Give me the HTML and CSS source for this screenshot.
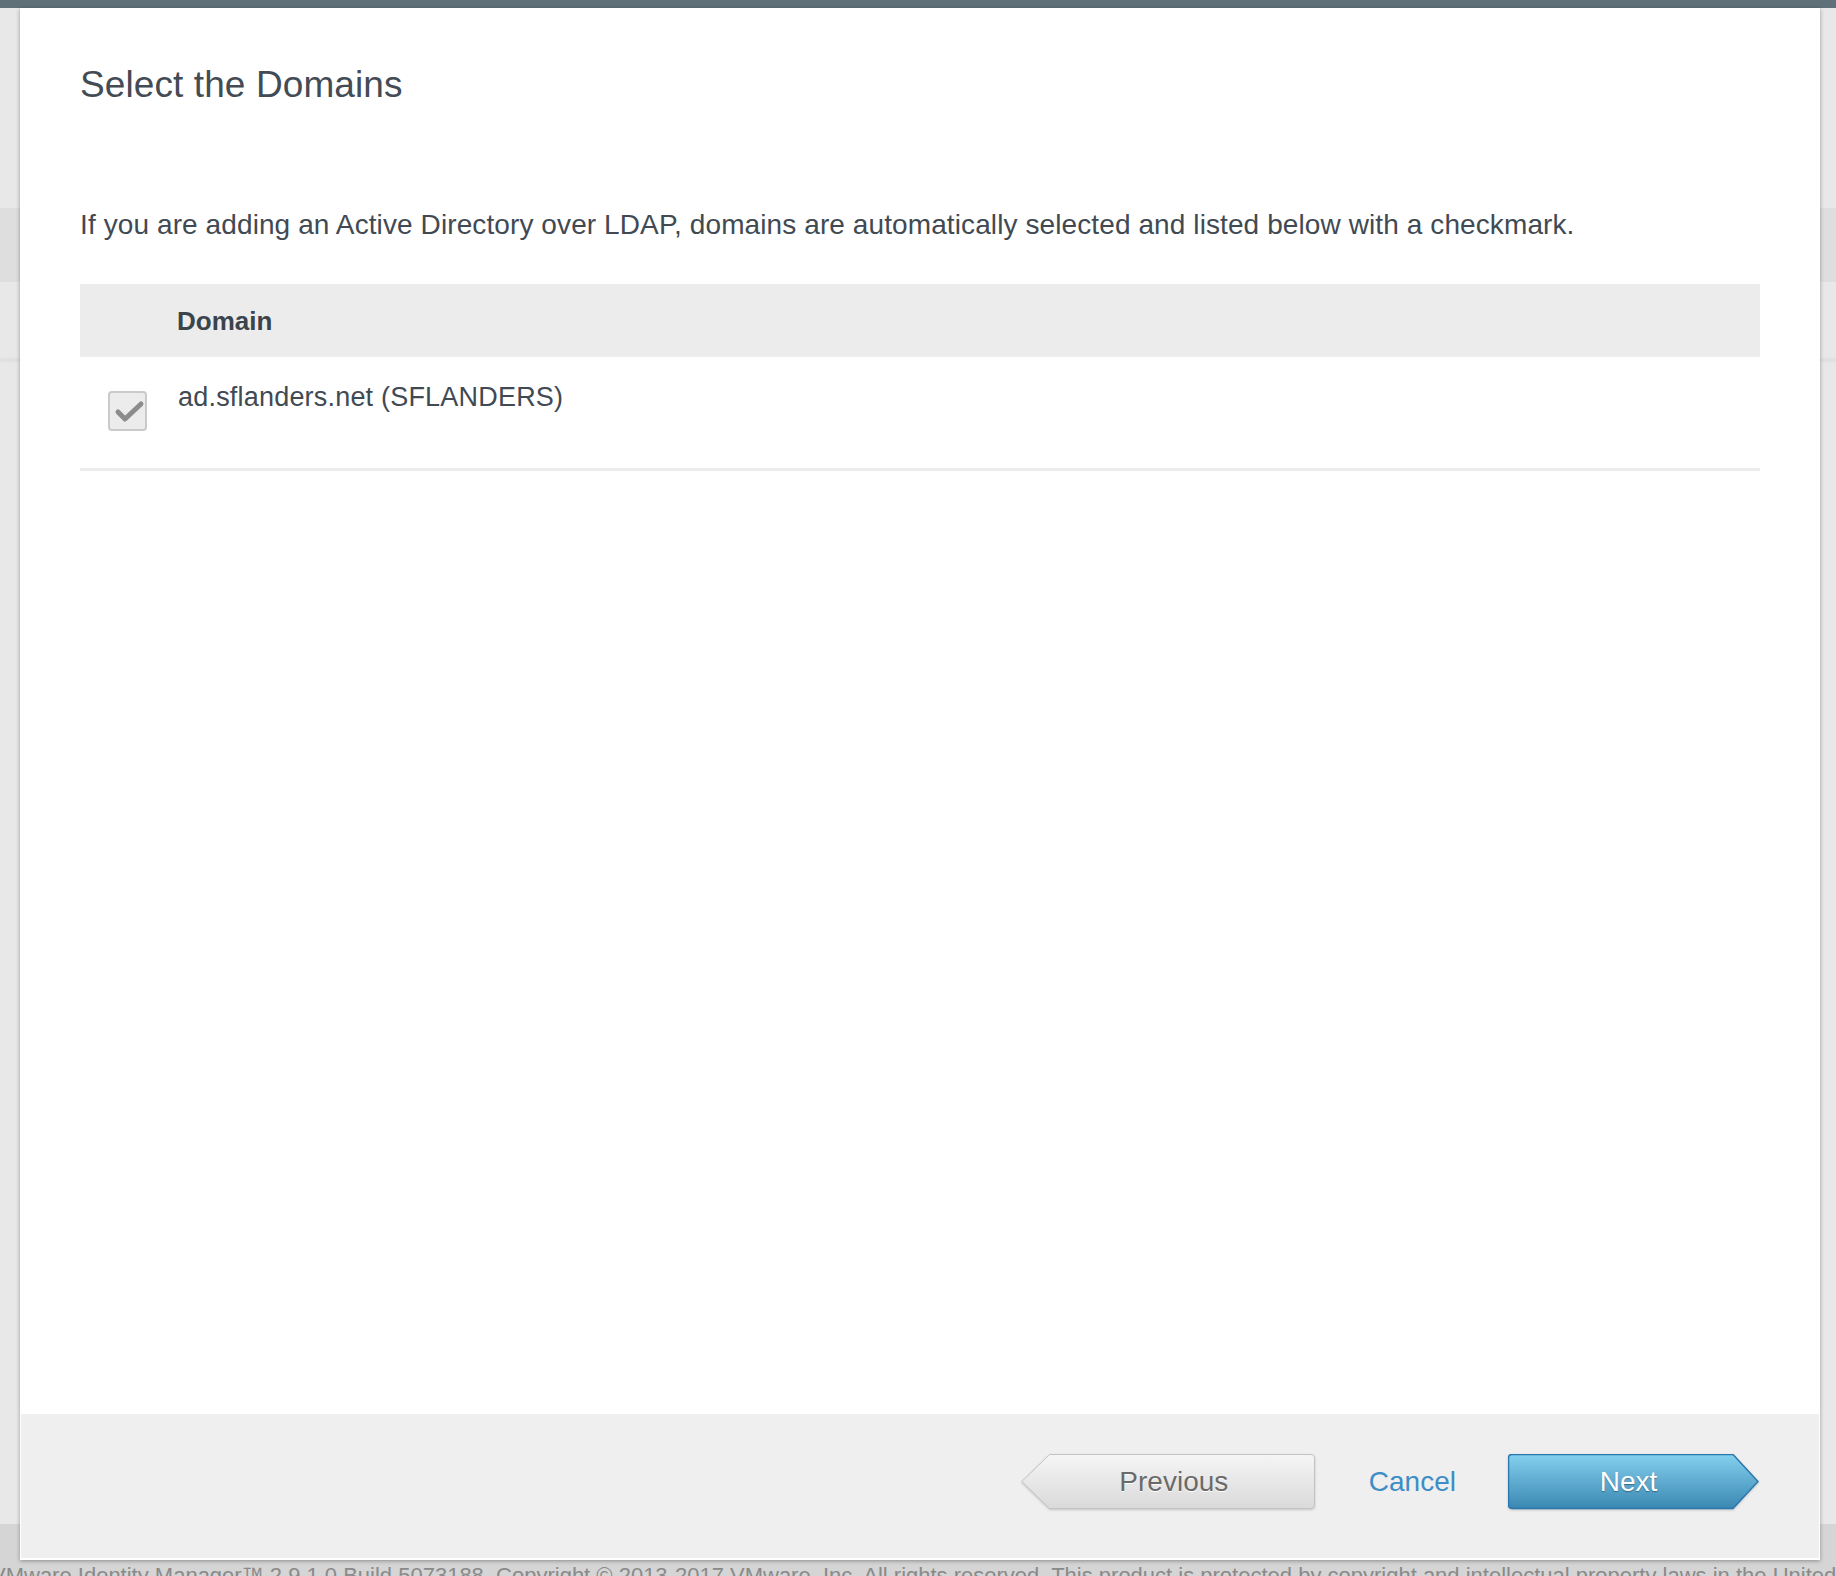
FILE: index.html
```html
<!DOCTYPE html>
<html lang="en">
<head>
  <meta charset="UTF-8">
  <meta name="viewport" content="width=device-width, initial-scale=1">
  <title>Add Directory - Select the Domains</title>
  <link rel="stylesheet" href="styles.css">
</head>
<body>

  <!-- Admin console behind the wizard -->
  <div class="page">
    <div class="topbar"></div>
    <div class="page-body">
      <div class="page-tabs"></div>
      <div class="page-rule"></div>
    </div>
    <footer class="page-footer">
      <p>VMware Identity Manager&trade; 2.9.1.0 Build 5073188. Copyright &copy; 2013-2017 VMware, Inc. All rights reserved. This product is protected by copyright and intellectual property laws in the United States and other countries.</p>
    </footer>
  </div>

  <!-- Wizard dialog -->
  <div class="modal">
    <div class="modal-body">
      <h2 class="modal-title">Select the Domains</h2>
      <p class="intro">If you are adding an Active Directory over LDAP, domains are automatically selected and listed below with a checkmark.</p>

      <div class="grid">
        <div class="grid-head">
          <span class="col-domain">Domain</span>
        </div>
        <div class="grid-row">
          <span class="check is-checked is-disabled">
            <svg width="35" height="36" viewBox="0 0 35 36">
              <path d="M8 19 L15 26 L31 11" fill="none" stroke="#8c8c8c" stroke-width="5" stroke-linecap="round" stroke-linejoin="round"/>
            </svg>
          </span>
          <span class="domain-name">ad.sflanders.net (SFLANDERS)</span>
        </div>
      </div>
    </div>

    <div class="modal-footer">
      <button class="btn btn-prev" type="button">
        <svg class="btn-shape" width="294" height="56" viewBox="0 0 294 56">
          <defs>
            <linearGradient id="prevFill" x1="0" y1="0" x2="0" y2="1">
              <stop offset="0" stop-color="#f5f5f5"/>
              <stop offset="1" stop-color="#dadada"/>
            </linearGradient>
          </defs>
          <path d="M28.5 0.5 H290 Q293.5 0.5 293.5 4 V51 Q293.5 54.5 290 54.5 H28.5 L0.8 27.5 Z" fill="url(#prevFill)" stroke="#c3c3c3"/>
        </svg>
        <span class="btn-label">Previous</span>
      </button>
      <a class="link-cancel" href="#">Cancel</a>
      <button class="btn btn-next" type="button">
        <svg class="btn-shape" width="251" height="56" viewBox="0 0 251 56">
          <defs>
            <linearGradient id="nextFill" x1="0" y1="0" x2="0" y2="1">
              <stop offset="0" stop-color="#84d0ee"/>
              <stop offset="1" stop-color="#3a87b3"/>
            </linearGradient>
          </defs>
          <path d="M4 0.5 H225 L250 27.5 L225 54.5 H4 Q0.5 54.5 0.5 51 V4 Q0.5 0.5 4 0.5 Z" fill="url(#nextFill)" stroke="#2a78ae" stroke-width="1.5"/>
        </svg>
        <span class="btn-label">Next</span>
      </button>
    </div>
  </div>

</body>
</html>
```

FILE: styles.css
```css
* {
  box-sizing: border-box;
}

html, body {
  margin: 0;
  height: 1576px;
  overflow: hidden;
}

body {
  font-family: "Liberation Sans", Arial, Helvetica, sans-serif;
  background: #e8e8e8;
  position: relative;
}

/* background console */
.page {
  display: flex;
  flex-direction: column;
  height: 1576px;
}

.topbar {
  height: 8px;
  background: #5f7079;
}

.page-body {
  flex: 1;
  padding-top: 200px;
}

.page-tabs {
  height: 74px;
  background: #dedede;
}

.page-rule {
  height: 4px;
  margin-top: 76px;
  background: #e0e0e0;
}

.page-footer {
  height: 52px;
  background: #d5d5d5;
  padding-top: 41px;
}

.page-footer p {
  margin: 0 0 0 -9px;
  font-size: 22px;
  line-height: 22px;
  color: #8a8a8a;
  white-space: nowrap;
}

/* dialog */
.modal {
  position: absolute;
  top: 8px;
  left: 20px;
  width: 1800px;
  height: 1552px;
  background: #fff;
  box-shadow: 0 1px 4px rgba(0, 0, 0, 0.35);
  display: flex;
  flex-direction: column;
}

.modal-body {
  flex: 1;
  padding: 55px 60px 0 60px;
}

.modal-title {
  margin: 0;
  font-size: 37px;
  line-height: 44px;
  font-weight: normal;
  letter-spacing: 0.1px;
  color: #434b54;
}

.intro {
  margin: 101px 0 0 0;
  font-size: 28px;
  line-height: 34px;
  letter-spacing: 0.1px;
  color: #414a53;
}

.grid {
  margin-top: 42px;
}

.grid-head {
  height: 73px;
  background: #ececec;
  display: flex;
  align-items: center;
  padding-left: 97px;
}

.col-domain {
  font-size: 26px;
  line-height: 26px;
  font-weight: bold;
  color: #3b434b;
}

.grid-row {
  height: 114px;
  border-bottom: 3px solid #ececec;
  display: flex;
  align-items: flex-start;
  padding-left: 28px;
}

.check {
  width: 39px;
  height: 40px;
  margin-top: 34px;
  border: 2px solid #cacaca;
  border-radius: 4px;
  background: #ececec;
  display: flex;
}

.domain-name {
  margin: 24px 0 0 31px;
  font-size: 27px;
  line-height: 32px;
  letter-spacing: 0.2px;
  color: #414a53;
}

/* wizard buttons */
.modal-footer {
  height: 144px;
  margin: 0 1px 2px 1px;
  background: #efefef;
  display: flex;
  justify-content: flex-end;
  align-items: flex-start;
  padding: 40px 60px 0 0;
}

.btn {
  position: relative;
  height: 56px;
  padding: 0;
  border: none;
  background: none;
  font-family: inherit;
  font-size: 28px;
  display: flex;
  align-items: center;
  justify-content: center;
  cursor: pointer;
}

.btn-shape {
  position: absolute;
  top: 0;
  left: 0;
  filter: drop-shadow(0 1px 1px rgba(0, 0, 0, 0.18));
}

.btn-label {
  position: relative;
  line-height: 28px;
  margin-top: -1px;
}

.btn-prev {
  width: 294px;
  padding-left: 12px;
  color: #6a6a6a;
  text-shadow: 0 1px 0 #fff;
}

.btn-next {
  width: 251px;
  padding-right: 10px;
  color: #fff;
  text-shadow: 0 1px 1px rgba(0, 0, 0, 0.35);
}

.link-cancel {
  margin: 0 52px 0 54px;
  height: 56px;
  display: flex;
  align-items: center;
  font-size: 28px;
  line-height: 28px;
  color: #3d8dc6;
  text-decoration: none;
}
```
